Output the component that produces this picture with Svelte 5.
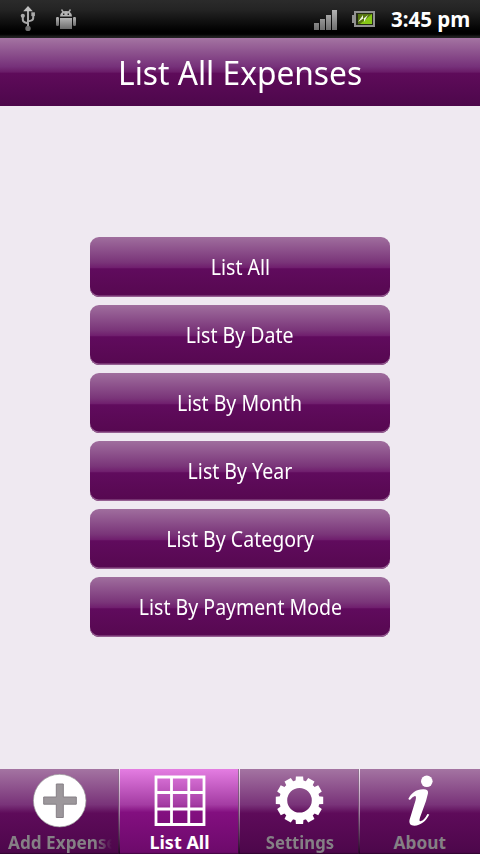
<script>
  const actions = [
    { label: 'List All' },
    { label: 'List By Date' },
    { label: 'List By Month' },
    { label: 'List By Year' },
    { label: 'List By Category' },
    { label: 'List By Payment Mode' }
  ];
  const tabs = [
    { id: 'add', label: 'Add Expense' },
    { id: 'list', label: 'List All' },
    { id: 'settings', label: 'Settings' },
    { id: 'about', label: 'About' }
  ];
  let active = $state('list');
  const teeth = Array.from({ length: 12 }, (_, i) => i * 30);
</script>

<div class="screen">
  <header class="status">
    <div class="left">
      <svg class="usb" width="16" height="26" viewBox="0 0 16 26">
        <g fill="none" stroke="#a9a9a9" stroke-width="2">
          <path d="M8 4v18M2.8 10v3.5q0 2.3 2.4 3l2.8.8M13.2 8v4q0 2-2.2 2.6L8 15.4" />
        </g>
        <path d="M8 0l4.8 5.300h-9.600z" fill="#c0c0c0" />
        <circle cx="2.8" cy="9.8" r="2.1" fill="#aaa" />
        <rect x="11.3" y="6.3" width="3.6" height="3.8" fill="#aaa" />
        <circle cx="8" cy="22.4" r="2.7" fill="#707070" />
      </svg>
      <svg class="droid" width="20" height="21" viewBox="0 0 20 21">
        <defs>
          <linearGradient id="metal" x2="0" y2="1">
            <stop offset="0" stop-color="#b4b4b4" /><stop offset="1" stop-color="#6c6c6c" />
          </linearGradient>
        </defs>
        <path d="M5.5 0.5l2 3M14.5 .5l-2 3" stroke="#aaa" stroke-width="1.4" />
        <path d="M4 7.500q.4-5.500 6-5.500t6 5.500z" fill="#b4b4b4" />
        <path d="M7 4.500h1.400v1.400H7zM11.6 4.500H13v1.400h-1.400z" fill="#222" />
        <path d="M4 9h12v11H4z" fill="url(#metal)" />
        <rect x="0" y="8" width="3" height="9" rx="1.2" fill="url(#metal)" />
        <rect x="17" y="8" width="3" height="9" rx="1.2" fill="url(#metal)" />
      </svg>
    </div>
    <div class="right">
      <svg class="signal" width="24" height="20" viewBox="0 0 24 20">
        <defs>
          <linearGradient id="bar" x2="0" y2="1">
            <stop offset="0" stop-color="#b4b4b4" /><stop offset="1" stop-color="#6e6e6e" />
          </linearGradient>
        </defs>
        <path d="M0 13h5v7H0zM6 9h5v11H6zM12 5h5v15h-5zM18 0h5v20h-5z" fill="url(#bar)" />
      </svg>
      <svg class="battery" width="23" height="16" viewBox="0 0 23 16">
        <path d="M0 4h2V0h21v16H2v-4H0z" fill="#929292" />
        <path d="M4 2h17v12H4z" fill="#252b16" />
        <path d="M6 3h14v10H6z" fill="#567511" />
        <path d="M8 13l12-10v10z" fill="#87c817" />
        <path d="M6 11l5-7v4l5-4-4 7v-4z" fill="#f1f6e5" />
      </svg>
      <span class="time">3:45 pm</span>
    </div>
  </header>
  <div class="title"><h1>List All Expenses</h1></div>
  <main>
    {#each actions as a}
      <button class="action"><span>{a.label}</span></button>
    {/each}
  </main>
  <nav>
    {#each tabs as t}
      <button class="tab {t.id}" class:active={active === t.id} onclick={() => (active = t.id)}>
        <svg class="icon" width="56" height="56" viewBox="0 0 56 56">
          {#if t.id === 'add'}
            <circle cx="27.7" cy="27.6" r="26.3" fill="#fff" stroke="#999" stroke-width=".7" />
            <path d="M24.3 11h7v13h13v7.2h-13v13.3h-7V31.2H11.7V24h12.6z" fill="#9c979b" stroke="#868086" />
          {:else if t.id === 'list'}
            <path d="M4 4h48v47.500h-48zM19.500 4v47.500M36.800 4v47.500M4 19.500h48M4 36h48" fill="none" stroke="#fff" stroke-width="2.8" />
          {:else if t.id === 'settings'}
            <g transform="translate(27.5 27.3)">
              <circle r="16.2" fill="none" stroke="#fff" stroke-width="7.8" />
              {#each teeth as angle}
                <path d="M-4-19L-3.6-23.7H3.6L4-19z" fill="#fff" transform="rotate({angle})" />
              {/each}
            </g>
          {:else}
            <circle cx="34.8" cy="8.3" r="5.8" fill="#fff" />
            <path d="M16.300 26C19 20.500 24 16.300 31 16.300q5.600-.3 5 4L34 28 28 44.500q-1.400 4.500 1 3.600 3.600-1.600 6.400-7.200l1.900.6C34.200 48 28.500 52.600 22.300 52.700q-6-.2-4.800-5.700L23.500 27.500q1.200-4.700-.6-4.600-2.200.4-5 4z" fill="#fff" />
          {/if}
        </svg>
        <span class="label"><b>{t.label}</b></span>
      </button>
    {/each}
  </nav>
</div>

<style>
  .screen {
    width: 480px;
    height: 854px;
    display: flex;
    flex-direction: column;
    overflow: hidden;
    background: #efe9f1;
    font-family: 'Noto Sans', 'Open Sans', sans-serif;
  }
  button { border: 0; padding: 0; font: inherit; }
  svg { display: block; flex: none; }
  .status {
    height: 38px;
    flex: none;
    display: flex;
    justify-content: space-between;
    background: linear-gradient(#2b2b2b, #242424 25%, #000 82%, #000 90%, #1c1c1c 96%, #242424);
  }
  .left { display: flex; padding-left: 20px; gap: 20px; }
  .usb { margin-top: 6px; }
  .droid { margin-top: 9px; }
  .right { display: flex; padding-right: 10px; }
  .signal { margin: 10px 14px 0 0; }
  .battery { margin: 11px 16px 0 0; }
  .time {
    width: 79px;
    font-size: 20.5px;
    font-weight: 700;
    line-height: 39px;
    color: #fff;
    white-space: nowrap;
  }
  .title {
    height: 68px;
    flex: none;
    display: flex;
    align-items: center;
    justify-content: center;
    background: linear-gradient(#a474a2, #76317a 42%, #6a1c68 50%, #5e0b5a 52%, #4d074b);
  }
  h1 {
    margin: 1px 0 0;
    font-size: 33px;
    font-weight: 400;
    line-height: 44px;
    color: #fff;
    white-space: nowrap;
    transform: scaleX(0.96);
  }
  main {
    flex: 1;
    display: flex;
    flex-direction: column;
    align-items: center;
    padding-top: 131px;
    gap: 8px;
  }
  .action {
    width: 300px;
    height: 60px;
    flex: none;
    display: flex;
    align-items: center;
    justify-content: center;
    padding-bottom: 2px;
    border-radius: 9px;
    background: linear-gradient(#a06e9e, #7a3579 42%, #701f6e 51%, #600b5d 53%, #560850);
    box-shadow: inset 0 -1.5px #955f92;
    color: #fff;
    font-size: 22px;
    line-height: 30px;
    white-space: nowrap;
  }
  .action span { transform: scaleX(0.888); }
  nav { height: 85px; flex: none; display: flex; }
  .tab {
    position: relative;
    width: 120px;
    height: 85px;
    display: flex;
    flex-direction: column;
    align-items: center;
    padding-top: 4px;
    background: linear-gradient(#a474a2, #793379 42%, #5e0b5a 52%, #4d074b 98%, #2a0329);
    color: #858085;
  }
  .tab.active {
    background: linear-gradient(#e47de2, #a43ca3 42%, #830f80 51%, #6d0a6b 98%, #3a0638);
    color: #fff;
  }
  .tab:not(:last-child)::after {
    content: '';
    position: absolute;
    right: 0;
    top: 0;
    width: 2px;
    height: 85px;
    background: linear-gradient(90deg, #3b123b88 50%, #0000 50%), linear-gradient(#f3e8f3, #b68bb4 45%, #260126);
  }
  .label {
    width: 104px;
    margin-top: 2px;
    overflow: hidden;
    font-size: 18px;
    line-height: 23px;
    white-space: nowrap;
  }
  .label b { display: inline-block; }
  .add .label { text-align: left; mask-image: linear-gradient(90deg, #000 84%, transparent); }
  .add b { transform: scaleX(0.955); transform-origin: left; }
  .list b { transform: translateX(-0.5px); }
  .settings b { transform: scaleX(0.925); }
  .about b { transform: translateX(-0.5px) scaleX(0.96); }
</style>
